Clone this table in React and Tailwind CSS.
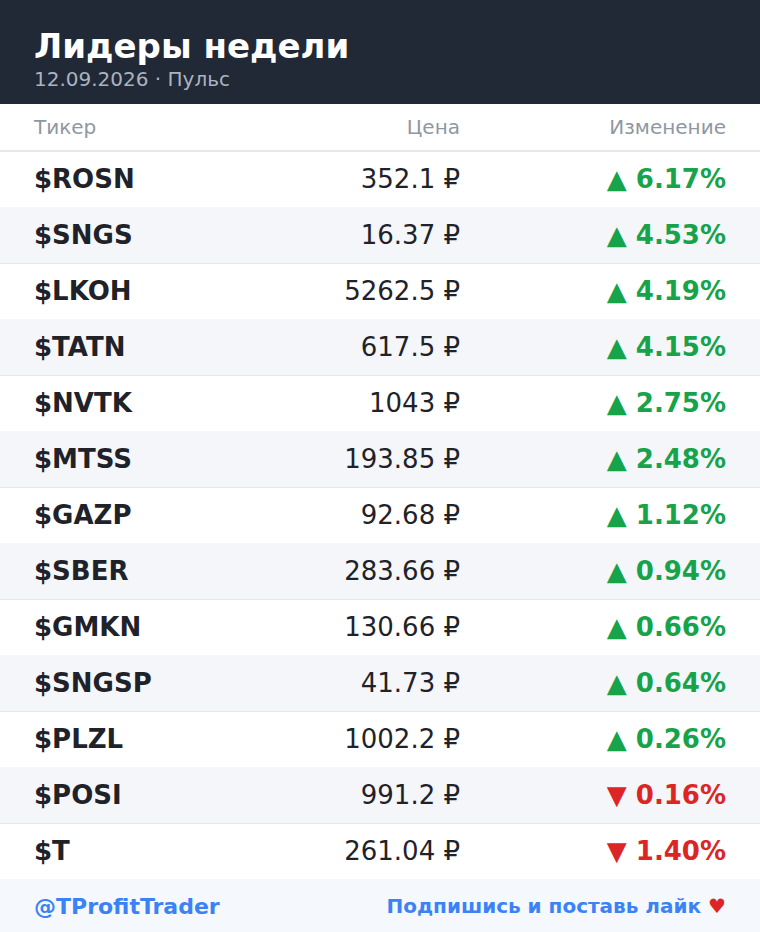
import React from 'react';

const rows = [
  { ticker: '$ROSN', price: '352.1 ₽', change: '6.17%', up: true },
  { ticker: '$SNGS', price: '16.37 ₽', change: '4.53%', up: true },
  { ticker: '$LKOH', price: '5262.5 ₽', change: '4.19%', up: true },
  { ticker: '$TATN', price: '617.5 ₽', change: '4.15%', up: true },
  { ticker: '$NVTK', price: '1043 ₽', change: '2.75%', up: true },
  { ticker: '$MTSS', price: '193.85 ₽', change: '2.48%', up: true },
  { ticker: '$GAZP', price: '92.68 ₽', change: '1.12%', up: true },
  { ticker: '$SBER', price: '283.66 ₽', change: '0.94%', up: true },
  { ticker: '$GMKN', price: '130.66 ₽', change: '0.66%', up: true },
  { ticker: '$SNGSP', price: '41.73 ₽', change: '0.64%', up: true },
  { ticker: '$PLZL', price: '1002.2 ₽', change: '0.26%', up: true },
  { ticker: '$POSI', price: '991.2 ₽', change: '0.16%', up: false },
  { ticker: '$T', price: '261.04 ₽', change: '1.40%', up: false },
];

const App = () => {
  return (
    <div className="w-[760px] h-[932px] bg-white font-['DejaVu_Sans',sans-serif] flex flex-col">
      {/* Header */}
      <div className="h-[104px] bg-[#212936] px-[34px] pt-[26px]">
        <h1 className="text-[34px] leading-[40px] font-bold text-white">Лидеры недели</h1>
        <p className="text-[20px] leading-[26px] text-[#aab3c0]">12.09.2026 · Пульс</p>
      </div>

      {/* Column headers */}
      <div className="h-[48px] flex items-center px-[34px] border-b-2 border-[#e6e8ec] text-[20px] text-[#9097a1]">
        <div className="flex-1">Тикер</div>
        <div className="w-[200px] text-right">Цена</div>
        <div className="w-[266px] text-right">Изменение</div>
      </div>

      {/* Rows */}
      {rows.map((row, i) => (
        <div
          key={row.ticker}
          className={`h-14 shrink-0 flex items-center px-[34px] text-[26px] text-[#1f2329] border-b ${
            i % 2 === 1 ? 'bg-[#f4f6fa] border-[#e4e7eb]' : 'bg-white border-[#f4f6fa]'
          }`}
        >
          <div className="flex-1 font-bold">{row.ticker}</div>
          <div className="w-[200px] text-right">{row.price}</div>
          <div className={`w-[266px] text-right font-bold ${row.up ? 'text-[#16a34a]' : 'text-[#dc2626]'}`}>
            {row.up ? '▲' : '▼'} {row.change}
          </div>
        </div>
      ))}

      {/* Footer */}
      <div className="flex-1 bg-[#f5f8fd] flex items-center justify-between px-[34px] font-bold text-[#3b82f6]">
        <span className="text-[22px]">@TProfitTrader</span>
        <span className="text-[20px]">
          Подпишись и поставь лайк <span className="text-[#dc2626]">♥</span>
        </span>
      </div>
    </div>
  );
};

export default App;
